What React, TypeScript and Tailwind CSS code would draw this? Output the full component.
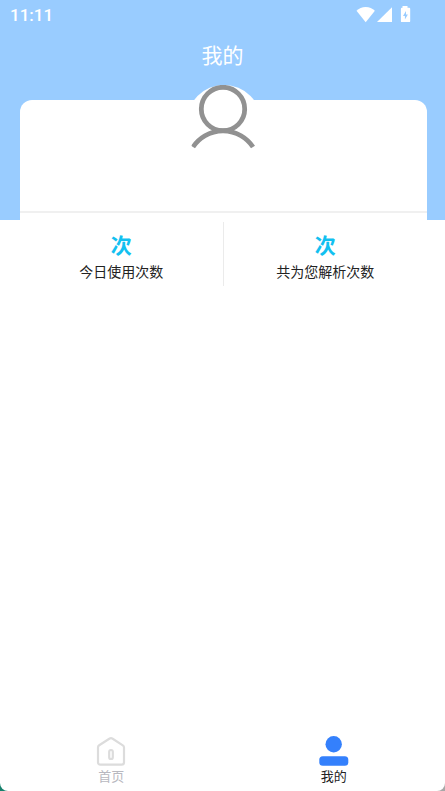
import type { ReactNode } from 'react'

const stats = [
  { value: '次', label: '今日使用次数' },
  { value: '次', label: '共为您解析次数' },
]

const tabs: { href: string; label: string; active: boolean; icon: ReactNode }[] = [
  {
    href: '#home',
    label: '首页',
    active: false,
    icon: (
      <svg width="30" height="30" viewBox="0 0 30 30" fill="none" stroke="#dcdcdc" strokeWidth="2.2" strokeLinejoin="round">
        <path d="M2 11.500c0-1 .4-1.700 1.200-2.200L13.700 2.500c.8-.6 1.800-.6 2.600 0l10.500 6.800c.8.5 1.200 1.200 1.200 2.200V26.300c0 1.500-.9 2.400-2.400 2.400H4.400C2.900 28.700 2 27.800 2 26.300z" />
        <rect x="13.200" y="14" width="3.600" height="9" rx="1.800" />
      </svg>
    ),
  },
  {
    href: '#mine',
    label: '我的',
    active: true,
    icon: (
      <svg width="30" height="30" viewBox="0 0 30 30" fill="#3480fc">
        <circle cx="14.700" cy="8.300" r="8.200" />
        <rect x="0.300" y="20.200" width="29" height="9.600" rx="3.500" />
      </svg>
    ),
  },
]

function StatusBar() {
  return (
    <div className="flex h-[30px] items-center justify-between pl-2.5 pr-[34px] text-white">
      <span className="font-['Roboto',sans-serif] text-[17px] font-medium leading-5">11:11</span>
      <svg width="55" height="18" viewBox="0 0 55 18" fill="currentColor">
        <path d="M0.500 4.800C3 2.300 6 1 9.700 1s6.700 1.300 9.200 3.800L9.700 16.200z" />
        <path d="M36 1.300V16H21z" />
        <path
          fillRule="evenodd"
          d="M46.500 0h5v1.800h1.800c.5 0 .9.400.9.900v12.500c0 .5-.4.900-.9.900h-7.500c-.5 0-.9-.4-.9-.9V2.700c0-.5.4-.9.9-.9H46.500zM50 5L47 9.900h1.900v3.500l3-4.900h-1.900z"
        />
      </svg>
    </div>
  )
}

function Avatar() {
  return (
    <div className="absolute -top-[15px] left-1/2 flex size-[75px] -translate-x-1/2 justify-center rounded-full bg-white">
      <svg width="64" height="64" viewBox="0 0 64 64" fill="none" stroke="#919191" strokeWidth="4.800">
        <circle cx="31.500" cy="24" r="21.700" />
        <path d="M1.500 62A36 36 0 0 1 61.500 62" />
      </svg>
    </div>
  )
}

export default function App() {
  return (
    <div className="min-h-screen bg-linear-to-r from-[#15806c] to-[#a8a8a8] font-['Noto_Sans_CJK_SC',sans-serif]">
      <div className="flex min-h-screen flex-col overflow-hidden rounded-b-lg bg-white">
        <header className="bg-[#99ccff]">
          <StatusBar />
          <h1 className="h-[70px] pt-2.5 text-center text-[21px] leading-7 text-white">我的</h1>
          <div className="relative ml-5 mr-[18px] rounded-t-xl bg-white pb-[7px]">
            <Avatar />
            <div className="h-[113px] border-b-2 border-[#f0f0f0]" />
          </div>
        </header>

        <main className="flex-1">
          <dl className="ml-5 mr-[18px] mt-0.5 grid grid-cols-2 divide-x divide-[#ebebeb]">
            {stats.map(({ value, label }) => (
              <div key={label} className="flex h-16 flex-col-reverse items-center gap-px pb-[5px]">
                <dt className="text-[14px] leading-5 text-[#222222]">{label}</dt>
                <dd className="text-[21px] font-bold leading-8 text-[#12c0f0]">{value}</dd>
              </div>
            ))}
          </dl>
        </main>

        <nav className="grid grid-cols-2 pb-[5px]">
          {tabs.map(({ href, label, active, icon }) => (
            <a
              key={href}
              href={href}
              aria-current={active ? 'page' : undefined}
              className={`flex flex-col items-center text-[13px] leading-5 ${
                active ? 'text-[#222222]' : 'text-[#b8b8c0]'
              }`}
            >
              {icon}
              {label}
            </a>
          ))}
        </nav>
      </div>
    </div>
  )
}
